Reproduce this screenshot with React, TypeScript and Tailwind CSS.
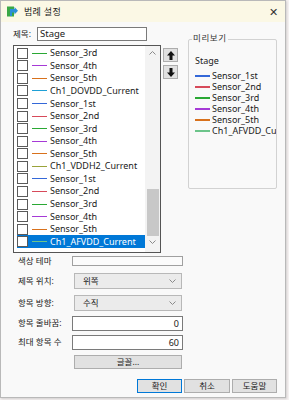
import React from "react";

const listRows = [
  { name: "Sensor_3rd", line: "bg-[#2aa834]" },
  { name: "Sensor_4th", line: "bg-[#a63ad6]" },
  { name: "Sensor_5th", line: "bg-[#d8711c]" },
  { name: "Ch1_DOVDD_Current", line: "bg-[#1fa0d6]" },
  { name: "Sensor_1st", line: "bg-[#3468d8]" },
  { name: "Sensor_2nd", line: "bg-[#d74a5a]" },
  { name: "Sensor_3rd", line: "bg-[#2aa834]" },
  { name: "Sensor_4th", line: "bg-[#a63ad6]" },
  { name: "Sensor_5th", line: "bg-[#d8711c]" },
  { name: "Ch1_VDDH2_Current", line: "bg-[#9aa33a]" },
  { name: "Sensor_1st", line: "bg-[#3468d8]" },
  { name: "Sensor_2nd", line: "bg-[#d74a5a]" },
  { name: "Sensor_3rd", line: "bg-[#2aa834]" },
  { name: "Sensor_4th", line: "bg-[#a63ad6]" },
  { name: "Sensor_5th", line: "bg-[#d8711c]" },
  { name: "Ch1_AFVDD_Current", line: "bg-[#6cc48a]", selected: true },
];

const previewRows = [
  { name: "Sensor_1st", line: "bg-[#3468d8]" },
  { name: "Sensor_2nd", line: "bg-[#d74a5a]" },
  { name: "Sensor_3rd", line: "bg-[#2aa834]" },
  { name: "Sensor_4th", line: "bg-[#a63ad6]" },
  { name: "Sensor_5th", line: "bg-[#d8711c]" },
  { name: "Ch1_AFVDD_Current", line: "bg-[#6cc48a]" },
];

function Chevron({ up = false }: { up?: boolean }) {
  return (
    <svg width="7" height="4" viewBox="0 0 7 4" className={up ? "rotate-180" : ""}>
      <path d="M0.5 0.5 L3.5 3.5 L6.5 0.5" fill="none" stroke="#8a8a8a" strokeWidth="1" />
    </svg>
  );
}

function ArrowButton({ down = false }: { down?: boolean }) {
  return (
    <div className="flex h-[14px] w-[15px] items-center justify-center border border-[#adadad] bg-[#e1e1e1]">
      <svg width="8" height="9" viewBox="0 0 8 9" className={down ? "rotate-180" : ""}>
        <path d="M4 0 L8 4.5 L5.5 4.5 L5.5 9 L2.5 9 L2.5 4.5 L0 4.5 Z" fill="#111" />
      </svg>
    </div>
  );
}

function Select({ value }: { value: string }) {
  return (
    <div className="ml-[2px] flex h-[16px] w-[108px] items-center justify-between border border-[#b8b8b8] bg-[#ebebeb] pl-[8px] pr-[5px]">
      <span className="text-[8.5px]">{value}</span>
      <Chevron />
    </div>
  );
}

export default function App() {
  return (
    <div
      className="h-[400px] w-[289px] overflow-hidden bg-[#f6f2f2] text-[9px] leading-none text-[#1a1a1a]"
      style={{ fontFamily: '"Noto Sans", "Noto Sans CJK KR", sans-serif' }}
    >
      <div className="flex h-[398px] w-[286px] flex-col border border-[#b9b9b9] bg-[#f9f9f9] shadow-[1px_1px_2px_rgba(0,0,0,0.15)]">
        {/* Title bar */}
        <div className="flex h-[21px] shrink-0 items-center bg-[#fbf8e5] pl-[6px] pr-[6px]">
          <svg width="11" height="11" viewBox="0 0 11 11">
            <rect x="0" y="0.5" width="7" height="10" fill="#3aa845" />
            <path d="M3 3 L7.5 3 L7.5 1 L11 4.8 L7.5 8.6 L7.5 6.6 L5 6.6 L5 10 L3 10 Z" fill="#2a8fd8" />
          </svg>
          <span className="ml-[6px] text-[9px] tracking-[0.3px]">범례 설정</span>
          <span className="ml-auto mr-[1px] text-[11px] font-light text-[#333]">✕</span>
        </div>

        {/* Body */}
        <div className="flex pl-[12px] pt-[5px]">
          {/* Left column */}
          <div className="flex w-[148px] flex-col">
            <div className="flex h-[14px] items-center">
              <span className="w-[24px] text-[8.5px]">제목:</span>
              <div className="flex h-[14px] w-[110px] items-center border border-[#7a7a7a] bg-white pl-[2px] text-[9.5px]">
                Stage
              </div>
            </div>
            <div className="mt-[4px] flex h-[208px] border border-[#555] bg-white">
              <div className="flex flex-1 flex-col overflow-hidden pl-[3px] pt-[1px]">
                {listRows.map((r, i) => (
                  <div
                    key={i}
                    className={`flex h-[12.57px] shrink-0 items-center leading-[12px] ${r.selected ? "bg-[#0078d7] text-white" : ""}`}
                  >
                    <div className="h-[11px] w-[11px] shrink-0 border border-[#5a5a5a] bg-white" />
                    <div className={`ml-[4px] h-[1px] w-[15px] shrink-0 ${r.line}`} />
                    <span className="ml-[3px] whitespace-nowrap">{r.name}</span>
                  </div>
                ))}
              </div>
              <div className="flex w-[15px] flex-col items-center bg-[#f3f3f3]">
                <div className="mt-[5px]">
                  <Chevron up />
                </div>
                <div className="mt-[134px] h-[47px] w-[12px] bg-[#c8c8c8]" />
                <div className="mt-[4px]">
                  <Chevron />
                </div>
              </div>
            </div>
          </div>

          {/* Arrow buttons */}
          <div className="ml-[2px] mt-[21px] flex flex-col gap-[3px]">
            <ArrowButton />
            <ArrowButton down />
          </div>

          {/* Preview group */}
          <div className="relative ml-[10px] mt-[12px] h-[150px] w-[89px] rounded-[2px] border border-[#d2d2d2]">
            <span className="absolute left-[3px] top-[-6px] bg-[#f9f9f9] px-[1px] text-[8.5px] tracking-[0.6px] text-[#333]">
              미리보기
            </span>
            <div className="flex flex-col overflow-hidden pl-[6px] pt-[16px]">
              <span className="text-[9px]">Stage</span>
              <div className="mt-[5px] flex flex-col">
                {previewRows.map((r, i) => (
                  <div key={i} className="flex h-[11px] items-center overflow-hidden whitespace-nowrap leading-[10px]">
                    <div className={`h-[2px] w-[15px] shrink-0 ${r.line}`} />
                    <span className="ml-[2px]">{r.name}</span>
                  </div>
                ))}
              </div>
            </div>
          </div>
        </div>

        {/* Form */}
        <div className="mt-[3px] flex flex-col pl-[17px] text-[8.5px]">
          <div className="flex h-[10px] items-center">
            <span className="w-[54px]">색상 테마</span>
            <div className="h-[10px] w-[111px] border border-[#a0a0a0] bg-[#fbfbfb]" />
          </div>
          <div className="mt-[7px] flex items-center">
            <span className="w-[54px]">제목 위치:</span>
            <Select value="위쪽" />
          </div>
          <div className="mt-[6px] flex items-center">
            <span className="w-[54px]">항목 방향:</span>
            <Select value="수직" />
          </div>
          <div className="mt-[5px] flex items-center">
            <span className="w-[54px]">항목 줄바꿈:</span>
            <div className="flex h-[15px] w-[111px] items-center justify-end border border-[#7a7a7a] bg-white pr-[3px] text-[9px]">
              0
            </div>
          </div>
          <div className="mt-[4px] flex items-center">
            <span className="w-[54px]">최대 항목 수</span>
            <div className="flex h-[15px] w-[111px] items-center justify-end border border-[#7a7a7a] bg-white pr-[3px] text-[9px]">
              60
            </div>
          </div>
          <div className="mt-[5px] flex">
            <div className="ml-[56px] flex h-[14px] w-[108px] items-center justify-center border border-[#adadad] bg-[#e1e1e1]">
              글꼴...
            </div>
          </div>
          <div className="mt-[10px] flex justify-end gap-[2px] pr-[8px]">
            <div className="flex h-[14px] w-[45px] items-center justify-center border border-[#0078d7] bg-[#e1e1e1]">
              확인
            </div>
            <div className="flex h-[14px] w-[46px] items-center justify-center border border-[#adadad] bg-[#e1e1e1]">
              취소
            </div>
            <div className="flex h-[14px] w-[45px] items-center justify-center border border-[#adadad] bg-[#e1e1e1]">
              도움말
            </div>
          </div>
        </div>
      </div>
    </div>
  );
}
